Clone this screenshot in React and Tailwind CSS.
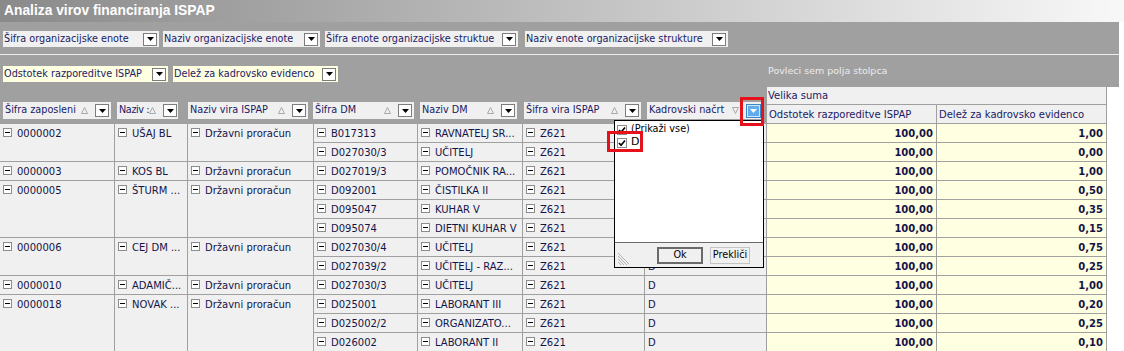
import React from "react";

const groups = [
  { id: "0000002", name: "UŠAJ BL", items: [["B017313", "RAVNATELJ SR...", "1,00"], ["D027030/3", "UČITELJ", "0,00"]] },
  { id: "0000003", name: "KOS BL", items: [["D027019/3", "POMOČNIK RA...", "1,00"]] },
  { id: "0000005", name: "ŠTURM ...", items: [["D092001", "ČISTILKA II", "0,50"], ["D095047", "KUHAR V", "0,35"], ["D095074", "DIETNI KUHAR V", "0,15"]] },
  { id: "0000006", name: "CEJ DM ...", items: [["D027030/4", "UČITELJ", "0,75"], ["D027039/2", "UČITELJ - RAZ...", "0,25"]] },
  { id: "0000010", name: "ADAMIČ...", items: [["D027030/3", "UČITELJ", "1,00"]] },
  { id: "0000018", name: "NOVAK ...", items: [["D025001", "LABORANT III", "0,20"], ["D025002/2", "ORGANIZATO...", "0,25"], ["D026002", "LABORANT II", "0,10"]] },
];

const spans = { 1: "row-span-1", 2: "row-span-2", 3: "row-span-3" };

// rows whose "D" sits fully under the open filter popup
const HIDDEN_ROWS = 7;

function DownTri({ color = "#000" }) {
  return (
    <svg width="7" height="4" viewBox="0 0 7 4">
      <path d="M0 0H7L3.5 4Z" fill={color} />
    </svg>
  );
}

function DropBtn() {
  return (
    <span className="flex h-[13px] w-[14px] shrink-0 items-center justify-center border border-[#7c7c7c] bg-white">
      <DownTri />
    </span>
  );
}

function SortTri({ down }) {
  return (
    <svg width="7" height="7" viewBox="0 0 7 7" className="shrink-0">
      {down ? (
        <path d="M0.5 0.5H6.5L3.5 6.5Z" fill="none" stroke="#a9a9a9" />
      ) : (
        <path d="M0.5 6.5H6.5L3.5 0.5Z" fill="none" stroke="#a9a9a9" />
      )}
    </svg>
  );
}

function Minus() {
  return (
    <span className="flex h-[9px] w-[9px] shrink-0 items-center justify-center border border-[#8c8c8c] bg-white">
      <span className="h-px w-[5px] bg-black" />
    </span>
  );
}

function Check() {
  return (
    <span className="flex h-[10px] w-[10px] shrink-0 items-center justify-center border border-[#8c8c8c] bg-white">
      <svg width="8" height="8" viewBox="0 0 8 8">
        <path d="M1 4L3 6.2L7 1.5" fill="none" stroke="#000" strokeWidth="1.7" />
      </svg>
    </span>
  );
}

function FieldBox({ label, className }) {
  return (
    <div className={`flex h-[16px] items-center justify-between pl-[1px] pr-[2px] text-[9.7px] text-[#1a1a66] ${className}`}>
      <span className="whitespace-nowrap">{label}</span>
      <DropBtn />
    </div>
  );
}

function HeadCell({ label, className, down, active, tight }) {
  return (
    <div className={`flex h-[17px] items-center bg-[#f0f0f0] pl-[2px] pr-[2px] text-[9.7px] text-[#1a1a66] ${className}`}>
      <span className={`whitespace-nowrap ${tight ? "tracking-[-0.4px]" : ""}`}>{label}</span>
      <span className="ml-auto mr-[7px]">
        <SortTri down={down} />
      </span>
      {active ? (
        <span className="flex h-[14px] w-[15px] shrink-0 items-center justify-center border border-[#3c86cc] bg-[#62acee] shadow-[inset_0_0_0_1px_#cfe6fb]">
          <DownTri color="#fff" />
        </span>
      ) : (
        <DropBtn />
      )}
    </div>
  );
}

function Cell({ children, className = "" }) {
  return (
    <div className={`flex items-start gap-[5px] overflow-hidden whitespace-nowrap border-b border-r border-[#a0a0a0] pl-[3px] pt-[4px] leading-[12px] ${className}`}>
      {children}
    </div>
  );
}

export default function App() {
  let row = 0;
  return (
    <div className="relative h-[351px] w-[1124px] overflow-hidden bg-white font-['DejaVu_Sans',sans-serif] text-[10px] text-[#141448]">
      <div className="flex h-[22px] items-center bg-gradient-to-r from-[#8a8a8a] to-[#f8f8f8] pl-[4px] font-['Liberation_Sans',sans-serif] text-[13.8px] font-bold text-white">
        Analiza virov financiranja ISPAP
      </div>

      <div className="w-[1119px] bg-[#a0a0a0]">
        <div className="flex h-[32px] items-start pl-[3px] pt-[9px]">
          <FieldBox label="Šifra organizacijske enote" className="w-[156px] bg-[#f0f0f0]" />
          <FieldBox label="Naziv organizacijske enote" className="ml-[4px] w-[157px] bg-[#f0f0f0]" />
          <FieldBox label="Šifra enote organizacijske struktue" className="ml-[5px] w-[193px] bg-[#f0f0f0]" />
          <FieldBox label="Naziv enote organizacijske strukture" className="ml-[7px] w-[203px] bg-[#f0f0f0]" />
        </div>
        <div className="h-px bg-[#ececec]" />
      </div>

      <div className="flex">
        <div className="w-[766px] bg-[#a0a0a0]">
          <div className="flex h-[47px] items-start pl-[3px] pt-[11px]">
            <FieldBox label="Odstotek razporeditve ISPAP" className="w-[165px] bg-[#ffffe1]" />
            <FieldBox label="Delež za kadrovsko evidenco" className="ml-[5px] w-[165px] bg-[#ffffe1]" />
          </div>
          <div className="flex h-[22px] items-start">
            <HeadCell label="Šifra zaposleni" className="ml-[3px] w-[108px]" />
            <HeadCell label="Naziv :" className="ml-[6px] w-[61px]" tight />
            <HeadCell label="Naziv vira ISPAP" className="ml-[10px] w-[120px]" />
            <HeadCell label="Šifra DM" className="ml-[5px] w-[101px]" />
            <HeadCell label="Naziv DM" className="ml-[6px] w-[97px]" />
            <HeadCell label="Šifra vira ISPAP" className="ml-[7px] w-[117px]" />
            <HeadCell label="Kadrovski načrt" className="ml-[6px] w-[116px]" down active />
          </div>
        </div>
        <div className="w-[353px]">
          <div className="flex h-[32px] items-center bg-[#a0a0a0] pl-[2px] text-[9.5px] text-[#ececec]">Povleci sem polja stolpca</div>
          <div className="w-[341px] border-l border-[#a0a0a0] bg-[#f0f0f0] text-[#1a1a66]">
            <div className="flex h-[18px] items-center border-b border-r border-[#a0a0a0] pl-[1px]">Velika suma</div>
            <div className="flex h-[19px]">
              <div className="flex w-[170px] items-center border-b border-r border-[#a0a0a0] pl-[2px]">Odstotek razporeditve ISPAP</div>
              <div className="flex w-[170px] items-center border-b border-r border-[#a0a0a0] pl-[2px]">Delež za kadrovsko evidenco</div>
            </div>
          </div>
        </div>
      </div>

      <div className="grid w-[1107px] auto-rows-[19px] grid-cols-[115px_73px_126px_104px_105px_122px_122px_170px_170px] bg-[#f0f0f0]">
        {groups.map((g) => (
          <React.Fragment key={g.id}>
            <Cell className={spans[g.items.length]}>
              <Minus />
              <span>{g.id}</span>
            </Cell>
            <Cell className={spans[g.items.length]}>
              <Minus />
              <span>{g.name}</span>
            </Cell>
            <Cell className={spans[g.items.length]}>
              <Minus />
              <span>Državni proračun</span>
            </Cell>
            {g.items.map((it) => {
              row += 1;
              const covered = row <= HIDDEN_ROWS;
              return (
                <React.Fragment key={it[0]}>
                  <Cell>
                    <Minus />
                    <span>{it[0]}</span>
                  </Cell>
                  <Cell>
                    <Minus />
                    <span>{it[1]}</span>
                  </Cell>
                  <Cell>
                    <Minus />
                    <span>Z621</span>
                  </Cell>
                  <Cell>{covered ? null : "D"}</Cell>
                  <Cell className="justify-end bg-[#ffffe1] pr-[3px] font-bold">100,00</Cell>
                  <Cell className="justify-end bg-[#ffffe1] pr-[3px] font-bold">{it[2]}</Cell>
                </React.Fragment>
              );
            })}
          </React.Fragment>
        ))}
      </div>

      <div className="absolute left-[614px] top-[120px] flex h-[148px] w-[150px] flex-col border border-black bg-white text-[9.7px] text-black">
        <div className="flex-1 pl-[2px] pt-[2px]">
          <div className="flex h-[13px] items-center gap-[4px]">
            <Check />
            <span>(Prikaži vse)</span>
          </div>
          <div className="flex h-[13px] items-center gap-[4px]">
            <Check />
            <span className="text-[11px]">D</span>
          </div>
        </div>
        <div className="relative flex h-[25px] items-center justify-end gap-[7px] border-t border-[#6a6a6a] bg-[#f0f0f0] pr-[13px]">
          <svg width="12" height="12" viewBox="0 0 12 12" className="absolute bottom-[2px] left-[2px]">
            <path d="M1 3L10 12M1 6L7 12M1 9L4 12M1 0L12 11" stroke="#b0b0b0" strokeWidth="1" />
          </svg>
          <span className="flex h-[17px] w-[46px] items-center justify-center border-2 border-[#6a6a6a]">Ok</span>
          <span className="flex h-[17px] w-[40px] items-center justify-center border border-[#c4c4c4]">Prekliči</span>
        </div>
      </div>

      <div className="absolute left-[740px] top-[97px] h-[29px] w-[24px] border-[3px] border-[#e5121b]" />
      <div className="absolute left-[607px] top-[131px] h-[21px] w-[36px] border-[3px] border-[#e5121b]" />
    </div>
  );
}
